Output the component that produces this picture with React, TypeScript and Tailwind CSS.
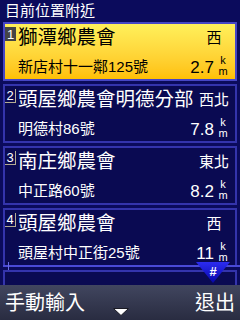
const FONT = "font-['Liberation_Sans','Noto_Sans_CJK_TC',sans-serif]";

type Place = {
  no: number;
  name: string;
  dir: string;
  addr: string;
  dist: string;
};

const places: Place[] = [
  { no: 1, name: "獅潭鄉農會", dir: "西", addr: "新店村十一鄰125號", dist: "2.7" },
  { no: 2, name: "頭屋鄉農會明德分部", dir: "西北", addr: "明德村86號", dist: "7.8" },
  { no: 3, name: "南庄鄉農會", dir: "東北", addr: "中正路60號", dist: "8.2" },
  { no: 4, name: "頭屋鄉農會", dir: "西", addr: "頭屋村中正街25號", dist: "11" },
];

function Card({ p, active }: { p: Place; active?: boolean }) {
  const ink = active ? "text-black" : "text-white";
  return (
    <div
      className={`mx-[3px] h-[59px] shrink-0 border-2 ${
        active
          ? "border-[#4646c4] bg-gradient-to-b from-[#fff05a] to-[#ffc000]"
          : "border-[#3434ac] bg-[#0a0a52]"
      } flex flex-col`}
    >
      <div className="flex h-[27px] items-start pt-[2px]">
        <div
          className={`mt-[1px] flex h-[14px] w-[11px] shrink-0 items-center justify-center text-[13px] leading-none text-white ${
            active ? "bg-[#454545]" : "border-r border-b border-[#b4ac92]"
          }`}
        >
          {p.no}
        </div>
        <div className={`ml-[2px] flex-1 overflow-hidden whitespace-nowrap text-[19.5px] leading-[22px] ${ink}`}>
          {p.name}
        </div>
        <div className={`mr-[6px] mt-[3px] w-[30px] shrink-0 text-center text-[15px] leading-[18px] ${ink}`}>
          {p.dir}
        </div>
      </div>
      <div className="flex flex-1 items-end pb-[2px]">
        <div className={`ml-[13px] flex-1 text-[15px] leading-[20px] ${ink}`}>{p.addr}</div>
        <div className={`text-[17px] leading-[18px] ${ink}`}>{p.dist}</div>
        <div className={`mr-[6px] ml-[3px] flex w-[12px] flex-col items-center text-[11px] leading-[11px] ${ink}`}>
          <span>k</span>
          <span>m</span>
        </div>
      </div>
    </div>
  );
}

function ScrollMark() {
  return (
    <>
      <div className="absolute top-[265px] left-[3px] h-[2px] w-[237px] bg-[#4a4ad6]" />
      <div className="absolute top-[262px] left-[8px] h-[8px] w-[1px] bg-[#6a6ae0]" />
      <svg className="absolute top-[262px] left-[196px]" width="34" height="22" viewBox="0 0 34 22">
        <defs>
          <linearGradient id="mk" x1="0" y1="0" x2="0" y2="1">
            <stop offset="0" stopColor="#2c2cf0" />
            <stop offset="1" stopColor="#0606a8" />
          </linearGradient>
        </defs>
        <polygon points="0,0 34,0 17,21" fill="url(#mk)" />
        <text x="17" y="14" textAnchor="middle" fontSize="13" fontWeight="bold" fill="#ffffff" fontFamily="Liberation Sans, sans-serif">
          #
        </text>
      </svg>
    </>
  );
}

export default function App() {
  return (
    <div className={`relative flex h-[320px] w-[240px] flex-col overflow-hidden bg-[#0b0b5c] ${FONT}`}>
      <div className="h-[21px] shrink-0 pl-[5px] text-[15px] leading-[21px] text-white">目前位置附近</div>
      <div className="flex flex-1 flex-col gap-[3px] overflow-hidden pt-[1px]">
        {places.map((p, i) => (
          <Card key={p.no} p={p} active={i === 0} />
        ))}
        <div className="mx-[3px] h-[59px] shrink-0 border-2 border-[#3434ac] bg-[#0a0a52]" />
      </div>
      <div className="relative flex h-[35px] shrink-0 items-center justify-between bg-gradient-to-b from-[#41465f] to-[#292c41] px-[5px] text-[20px] text-white">
        <span>手動輸入</span>
        <span>退出</span>
        <svg className="absolute bottom-[4px] left-[113px]" width="16" height="8" viewBox="0 0 16 8">
          <polygon points="0.5,0.5 15.5,0.5 8,7.5" fill="#ffffff" stroke="#1a1a24" strokeWidth="1" />
        </svg>
      </div>
      <ScrollMark />
    </div>
  );
}
